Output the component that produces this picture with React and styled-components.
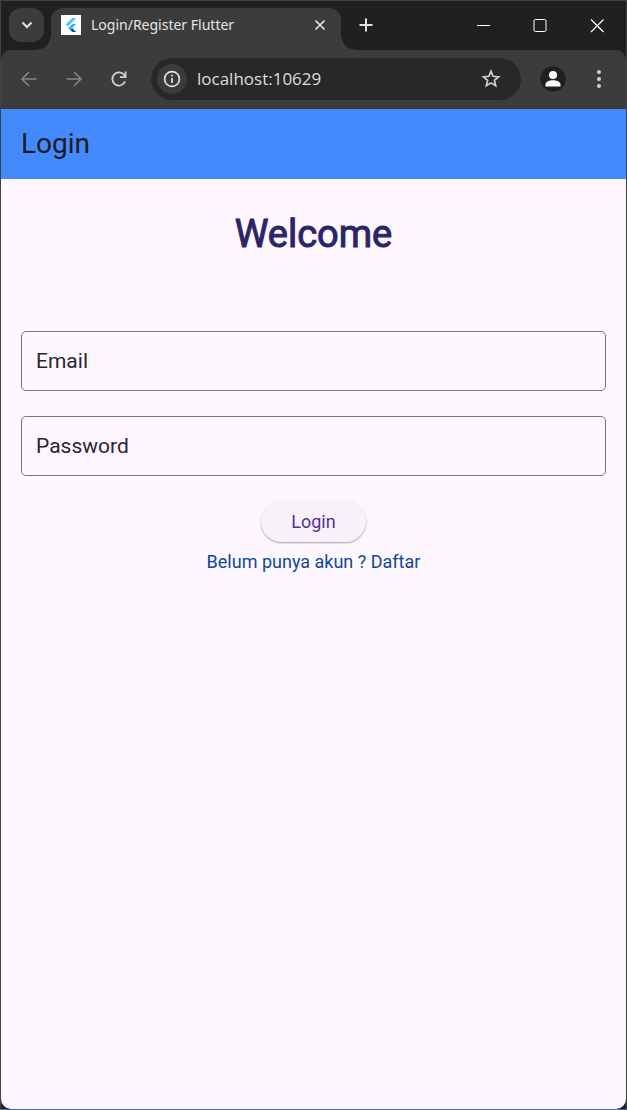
import React from "react";
import styled, { createGlobalStyle } from "styled-components";

const GlobalStyle = createGlobalStyle`
  *, *::before, *::after { box-sizing: border-box; }
  body { margin: 0; background: #1a1c1b; }
  button, input { font: inherit; margin: 0; }
`;

const uiFont = `"Segoe UI", "Noto Sans", "Open Sans", sans-serif`;
const appFont = `Roboto, "Noto Sans", sans-serif`;

const Window = styled.div`
  display: flex;
  flex-direction: column;
  min-height: 100vh;
  border: 1px solid #404241;
  border-bottom-color: #2f73b3;
  background: #1f2120;
`;

const TabStrip = styled.header`
  display: flex;
  align-items: flex-start;
  height: 49px;
  padding: 7px 0 0 8px;
  background: #1f2120;
  font-family: ${uiFont};
`;

const IconButton = styled.button`
  flex: none;
  display: flex;
  align-items: center;
  justify-content: center;
  width: ${(p) => p.$width || 34}px;
  height: ${(p) => p.$height || 34}px;
  padding: 0;
  border: 0;
  border-radius: ${(p) => p.$radius || 0}px;
  background: ${(p) => p.$fill || "transparent"};
  color: ${(p) => p.$color || "#e3e3e3"};
`;

const Tab = styled.div`
  position: relative;
  display: flex;
  align-items: center;
  flex: 0 1 290px;
  min-width: 0;
  height: 42px;
  margin-left: 7px;
  padding: 0 12px 8px 10px;
  border-radius: 12px 12px 0 0;
  background: #3c3c3c;

  &::before,
  &::after {
    content: "";
    position: absolute;
    bottom: 0;
    width: 14px;
    height: 14px;
  }
  &::before {
    right: 100%;
    background: radial-gradient(circle at 0 0, transparent 13px, #3c3c3c 14px);
  }
  &::after {
    left: 100%;
    background: radial-gradient(circle at 100% 0, transparent 13px, #3c3c3c 14px);
  }
`;

const TabTitle = styled.span`
  flex: 1;
  min-width: 0;
  margin-left: 10px;
  overflow: hidden;
  white-space: nowrap;
  color: #e6e6e6;
  font-size: 14px;
  line-height: 20px;
`;

const WindowControls = styled.div`
  display: flex;
  margin-left: auto;
`;

const Toolbar = styled.nav`
  display: flex;
  align-items: center;
  height: 59px;
  padding: 0 10px 1px 10px;
  border-bottom: 1px solid #403a28;
  border-radius: 10px 10px 0 0;
  background: #3c3c3c;
  font-family: ${uiFont};
`;

const NavButtons = styled.div`
  display: flex;
  gap: 10px;
`;

const ProfileButtons = styled.div`
  display: flex;
  gap: 10px;
`;

const AddressBar = styled.div`
  display: flex;
  align-items: center;
  flex: 1;
  min-width: 0;
  height: 42px;
  margin: 0 14px 0 15px;
  padding: 0 13px 0 6px;
  border-radius: 21px;
  background: #282828;
`;

const AddressInput = styled.input`
  flex: 1;
  min-width: 0;
  height: 30px;
  padding: 0 0 0 10px;
  border: 0;
  outline: 0;
  background: transparent;
  color: #dedede;
  font-family: "Segoe UI", "Open Sans", sans-serif;
  font-size: 17px;
`;

const Page = styled.main`
  flex: 1;
  border-radius: 0 0 10px 10px;
  background: #fef7ff;
  font-family: ${appFont};
`;

const AppBar = styled.div`
  display: flex;
  align-items: center;
  height: 70px;
  padding: 0 20px;
  background: #448aff;
`;

const AppTitle = styled.h1`
  margin: 0;
  color: #1d1b20;
  font-size: 28px;
  font-weight: 400;
  line-height: 36px;
`;

const LoginForm = styled.form`
  display: flex;
  flex-direction: column;
  align-items: center;
  padding: 32px 20px;
`;

const Welcome = styled.h2`
  margin: 0 0 74px;
  color: #2a2567;
  font-size: 38px;
  font-weight: 400;
  line-height: 46px;
  -webkit-text-stroke: 1px #2a2567;
`;

const Field = styled.label`
  width: 100%;
  margin-bottom: 25px;
`;

const TextInput = styled.input`
  display: block;
  width: 100%;
  height: 60px;
  padding: 0 14px;
  border: 1px solid #79747e;
  border-radius: 5px;
  outline: 0;
  background: transparent;
  color: #1d1b20;
  font-size: 21px;

  &::placeholder {
    color: #29262f;
    opacity: 1;
  }
`;

const SubmitButton = styled.button`
  height: 41px;
  padding: 0 30px;
  border: 0;
  border-radius: 21px;
  background: #f7f2fa;
  box-shadow: 0 1px 2px rgba(0, 0, 0, 0.35);
  color: #4f2f9c;
  font-size: 18px;
  line-height: 24px;
`;

const RegisterLink = styled.a`
  margin-top: 8px;
  color: #0d47a1;
  font-size: 18px;
  line-height: 24px;
  text-decoration: none;
`;

function Icon({ size = 20, box = 20, stroke = 2, children }) {
  return (
    <svg
      width={size}
      height={size}
      viewBox={`0 0 ${box} ${box}`}
      fill="none"
      stroke="currentColor"
      strokeWidth={stroke}
      aria-hidden="true"
    >
      {children}
    </svg>
  );
}

function FlutterLogo() {
  return (
    <svg width="20" height="20" viewBox="0 0 20 20" aria-hidden="true">
      <path fill="#fff" d="M0 0h20v20H0z" />
      <path fill="#45c5f8" d="M11.2 3h4L6.8 11.4l-2-2z" />
      <path fill="#35b5f6" d="M11.2 9h4l-4 4-2 2-2-2z" />
      <path fill="#075b9d" d="M9.2 15l2-2 4 4h-4z" />
    </svg>
  );
}

function TextField({ label, type }) {
  return (
    <Field>
      <TextInput type={type} placeholder={label} aria-label={label} />
    </Field>
  );
}

export default function App() {
  return (
    <>
      <GlobalStyle />
      <Window>
        <TabStrip>
          <IconButton type="button" aria-label="Search tabs" $width={35} $radius={12} $fill="#3c3c3c">
            <Icon>
              <path d="M5.5 7.5 10 12l4.5-4.5" />
            </Icon>
          </IconButton>
          <Tab>
            <FlutterLogo />
            <TabTitle>Login/Register Flutter</TabTitle>
            <IconButton type="button" aria-label="Close tab" $width={18} $height={18}>
              <Icon size={18} box={18} stroke={1.7}>
                <path d="m4.5 4.5 9 9m0-9-9 9" />
              </Icon>
            </IconButton>
          </Tab>
          <IconButton type="button" aria-label="New tab" $width={50} $height={34}>
            <Icon>
              <path d="M10 3.5v13M3.5 10h13" />
            </Icon>
          </IconButton>
          <WindowControls>
            <IconButton type="button" aria-label="Minimize" $width={56} $height={34} $color="#fff">
              <Icon stroke={1}>
                <path d="M4 10.5h13" />
              </Icon>
            </IconButton>
            <IconButton type="button" aria-label="Maximize" $width={57} $height={34} $color="#fff">
              <Icon stroke={1}>
                <rect x="4" y="4.5" width="12" height="12" rx="1.5" />
              </Icon>
            </IconButton>
            <IconButton type="button" aria-label="Close" $width={58} $height={34} $color="#fff">
              <Icon stroke={1.2}>
                <path d="m4 4.5 12.5 12.5m0-12.5L4 17" />
              </Icon>
            </IconButton>
          </WindowControls>
        </TabStrip>

        <Toolbar>
          <NavButtons>
            <IconButton type="button" aria-label="Back" $width={35} $color="#858585">
              <Icon stroke={1.6}>
                <path d="M17.5 10H3.5M10 3l-7 7 7 7" />
              </Icon>
            </IconButton>
            <IconButton type="button" aria-label="Forward" $width={35} $color="#858585">
              <Icon stroke={1.6}>
                <path d="M2.5 10h14M10 3l7 7-7 7" />
              </Icon>
            </IconButton>
            <IconButton type="button" aria-label="Reload" $width={35} $color="#d0d0d0">
              <Icon stroke={1.8}>
                <path d="M16.1 12.4a6.6 6.6 0 1 1-.7-6.2l1.4 1.6M16.6 2.5v5.7h-5.7" />
              </Icon>
            </IconButton>
          </NavButtons>
          <AddressBar>
            <IconButton type="button" aria-label="Site information" $width={30} $height={30} $radius={15} $fill="#3c3c3c">
              <Icon stroke={1.7}>
                <circle cx="10" cy="10" r="7.4" />
                <path d="M10 9v5M10 5.8v1.8" />
              </Icon>
            </IconButton>
            <AddressInput type="text" aria-label="Address" defaultValue="localhost:10629" />
            <IconButton type="button" aria-label="Bookmark this page" $height={30} $color="#d0d0d0">
              <Icon size={22} box={22} stroke={1.7}>
                <path d="m11 3.3 2.1 5 5.5.5-4.2 3.6 1.3 5.4-4.7-2.9-4.7 2.9 1.3-5.4-4.2-3.6 5.5-.5z" />
              </Icon>
            </IconButton>
          </AddressBar>
          <ProfileButtons>
            <IconButton type="button" aria-label="Profile" $width={36} $color="#fff">
              <svg width="26" height="26" viewBox="0 0 26 26" aria-hidden="true">
                <circle cx="13" cy="13" r="12.7" fill="#1f2120" />
                <circle cx="13" cy="9" r="4" fill="currentColor" />
                <path fill="currentColor" d="M5.5 20.5v-2c0-3 4.5-4.3 7.5-4.3s7.5 1.3 7.5 4.3v2z" />
              </svg>
            </IconButton>
            <IconButton type="button" aria-label="Menu" $width={35} $color="#d0d0d0">
              <svg width="20" height="20" viewBox="0 0 20 20" fill="currentColor" aria-hidden="true">
                <circle cx="10" cy="3" r="2" />
                <circle cx="10" cy="10" r="2" />
                <circle cx="10" cy="17" r="2" />
              </svg>
            </IconButton>
          </ProfileButtons>
        </Toolbar>

        <Page>
          <AppBar>
            <AppTitle>Login</AppTitle>
          </AppBar>
          <LoginForm onSubmit={(e) => e.preventDefault()}>
            <Welcome>Welcome</Welcome>
            <TextField label="Email" type="email" />
            <TextField label="Password" type="password" />
            <SubmitButton type="submit">Login</SubmitButton>
            <RegisterLink href="#daftar">Belum punya akun ? Daftar</RegisterLink>
          </LoginForm>
        </Page>
      </Window>
    </>
  );
}
